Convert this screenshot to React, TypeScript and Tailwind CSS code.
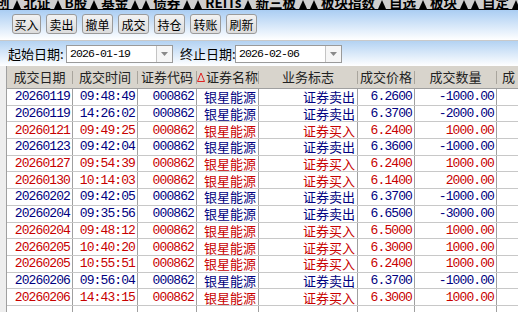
import React from "react";

type Row = [string, string, "buy" | "sell", string, string];

const ROWS: Row[] = [
  ["20260119", "09:48:49", "sell", "6.2600", "-1000.00"],
  ["20260119", "14:26:02", "sell", "6.3700", "-2000.00"],
  ["20260121", "09:49:25", "buy", "6.2400", "1000.00"],
  ["20260123", "09:42:04", "sell", "6.3600", "-1000.00"],
  ["20260127", "09:54:39", "buy", "6.2400", "1000.00"],
  ["20260130", "10:14:03", "buy", "6.1400", "2000.00"],
  ["20260202", "09:42:05", "sell", "6.3700", "-1000.00"],
  ["20260204", "09:35:56", "sell", "6.6500", "-3000.00"],
  ["20260204", "09:48:12", "buy", "6.5000", "1000.00"],
  ["20260205", "10:40:20", "buy", "6.3000", "1000.00"],
  ["20260205", "10:55:51", "buy", "6.2400", "1000.00"],
  ["20260206", "09:56:04", "sell", "6.3700", "-1000.00"],
  ["20260206", "14:43:15", "buy", "6.3000", "1000.00"],
  ["", "", "buy", "", ""],
];

const TABS = ["创", "北证", "B股", "基金", "", "债券", "", "REITs", "新三板", "", "板块指数", "自选", "板块", "", "自定"];

const BUTTONS = ["买入", "卖出", "撤单", "成交", "持仓", "转账", "刷新"];

const cjk = "font-['SimSun','Noto_Sans_CJK_SC',sans-serif]";
const mono = "font-['Liberation_Mono',monospace] text-[13px] tracking-[-0.9px]";

function Tri() {
  return (
    <svg width="8" height="9" viewBox="0 0 8 9" className="shrink-0">
      <polygon points="4,0 8,9 0,9" fill="#000" />
    </svg>
  );
}

function DateBox({ value }: { value: string }) {
  return (
    <div className="flex h-[18px] w-[107px] shrink-0 border border-[#9a9a9a] bg-white">
      <div className="flex flex-1 items-center pl-[3px] font-['Liberation_Mono',monospace] text-[11.5px] leading-[12px] tracking-[-0.9px] text-black">
        {value}
      </div>
      <div className="flex w-[16px] items-center justify-center border-l border-[#c4c4c4] bg-[#f6f6f6]">
        <svg width="7" height="4" viewBox="0 0 7 4">
          <polygon points="0,0 7,0 3.5,4" fill="#8a8a8a" />
        </svg>
      </div>
    </div>
  );
}

function HeaderCell({ w, label, mark }: { w: string; label: string; mark?: boolean }) {
  return (
    <div className={`${w} flex shrink-0 items-center`}>
      <div className="flex flex-1 items-center justify-center gap-[1px]">
        {mark && (
          <svg width="8" height="10" viewBox="0 0 8 10" className="mb-[1px]">
            <polygon points="4,1 7.5,9.5 0.5,9.5" fill="none" stroke="#e02020" strokeWidth="1" />
          </svg>
        )}
        <span>{label}</span>
      </div>
      <div className="h-[13px] w-px bg-[#a9a59d]" />
    </div>
  );
}

export default function App() {
  return (
    <div className={`h-[312px] w-[518px] overflow-hidden bg-white ${cjk} text-[13px] leading-[14px]`}>
      {/* market tabs, clipped at top */}
      <div className="h-[10px] overflow-hidden border-b border-black bg-[#cfcfcf]">
        <div className="-ml-[4px] -mt-[5px] flex items-end gap-[3px] whitespace-nowrap text-[13.5px] font-bold leading-[14px] text-black">
          {TABS.map((t, i) => (
            <React.Fragment key={i}>
              {t && <span>{t}</span>}
              <Tri />
            </React.Fragment>
          ))}
        </div>
      </div>

      {/* toolbar */}
      <div className="flex h-[30px] items-start gap-[5px] bg-gradient-to-b from-[#aacdf2] to-white pl-[12px] pt-[4px]">
        {BUTTONS.map((b, i) => (
          <button
            key={b}
            className={`${i === 0 ? "w-[29px]" : "w-[31px]"} flex h-[20px] items-center justify-center rounded-[3px] border border-[#9a9a9a] bg-gradient-to-b from-[#f2f2f2] to-[#dcdcdc] text-[12px] leading-[13px] text-black`}
          >
            {b}
          </button>
        ))}
      </div>

      {/* date filters */}
      <div className="flex h-[26px] items-center whitespace-nowrap border-t border-[#c9c9c9] bg-gradient-to-b from-[#b3d2f2] to-white pl-[8px]">
        <span className="w-[58px] shrink-0 text-black">起始日期:</span>
        <DateBox value="2026-01-19" />
        <span className="ml-[7px] w-[55px] shrink-0 text-black">终止日期:</span>
        <DateBox value="2026-02-06" />
      </div>

      {/* table */}
      <div className="flex">
        <div className="w-[7px] shrink-0 border-r border-[#a0a0a0] bg-[#eeeeee]" />
        <div className="flex-1">
          <div className="flex h-[23px] border-b border-[#a0a0a0] bg-[#d8d4cc] text-[#222]">
            <HeaderCell w="w-[66px]" label="成交日期" />
            <HeaderCell w="w-[65px]" label="成交时间" />
            <HeaderCell w="w-[59px]" label="证券代码" />
            <HeaderCell w="w-[62px]" label="证券名称" mark />
            <HeaderCell w="w-[99px]" label="业务标志" />
            <HeaderCell w="w-[57px]" label="成交价格" />
            <HeaderCell w="w-[82px]" label="成交数量" />
            <div className="flex flex-1 items-center pl-[5px]">成</div>
          </div>
          {ROWS.map((r, i) => {
            const color = r[2] === "buy" ? "text-[#c80000]" : "text-[#000080]";
            const cell = "flex shrink-0 items-center justify-end overflow-hidden border-r border-[#a0a0a0] pr-[2px]";
            return (
              <div key={i} className={`flex h-[16.7px] border-b border-[#c8c8c8] leading-[13px] ${color}`}>
                <div className={`${cell} w-[66px] ${mono}`}>{r[0]}</div>
                <div className={`${cell} w-[65px] ${mono}`}>{r[1]}</div>
                <div className={`${cell} w-[59px] ${mono}`}>{r[0] && "000862"}</div>
                <div className={`${cell} w-[62px]`}>{r[0] && "银星能源"}</div>
                <div className={`${cell} w-[99px]`}>{r[0] && (r[2] === "buy" ? "证券买入" : "证券卖出")}</div>
                <div className={`${cell} w-[57px] ${mono}`}>{r[3]}</div>
                <div className={`${cell} w-[82px] ${mono}`}>{r[4]}</div>
                <div className="flex-1" />
              </div>
            );
          })}
        </div>
      </div>
    </div>
  );
}
